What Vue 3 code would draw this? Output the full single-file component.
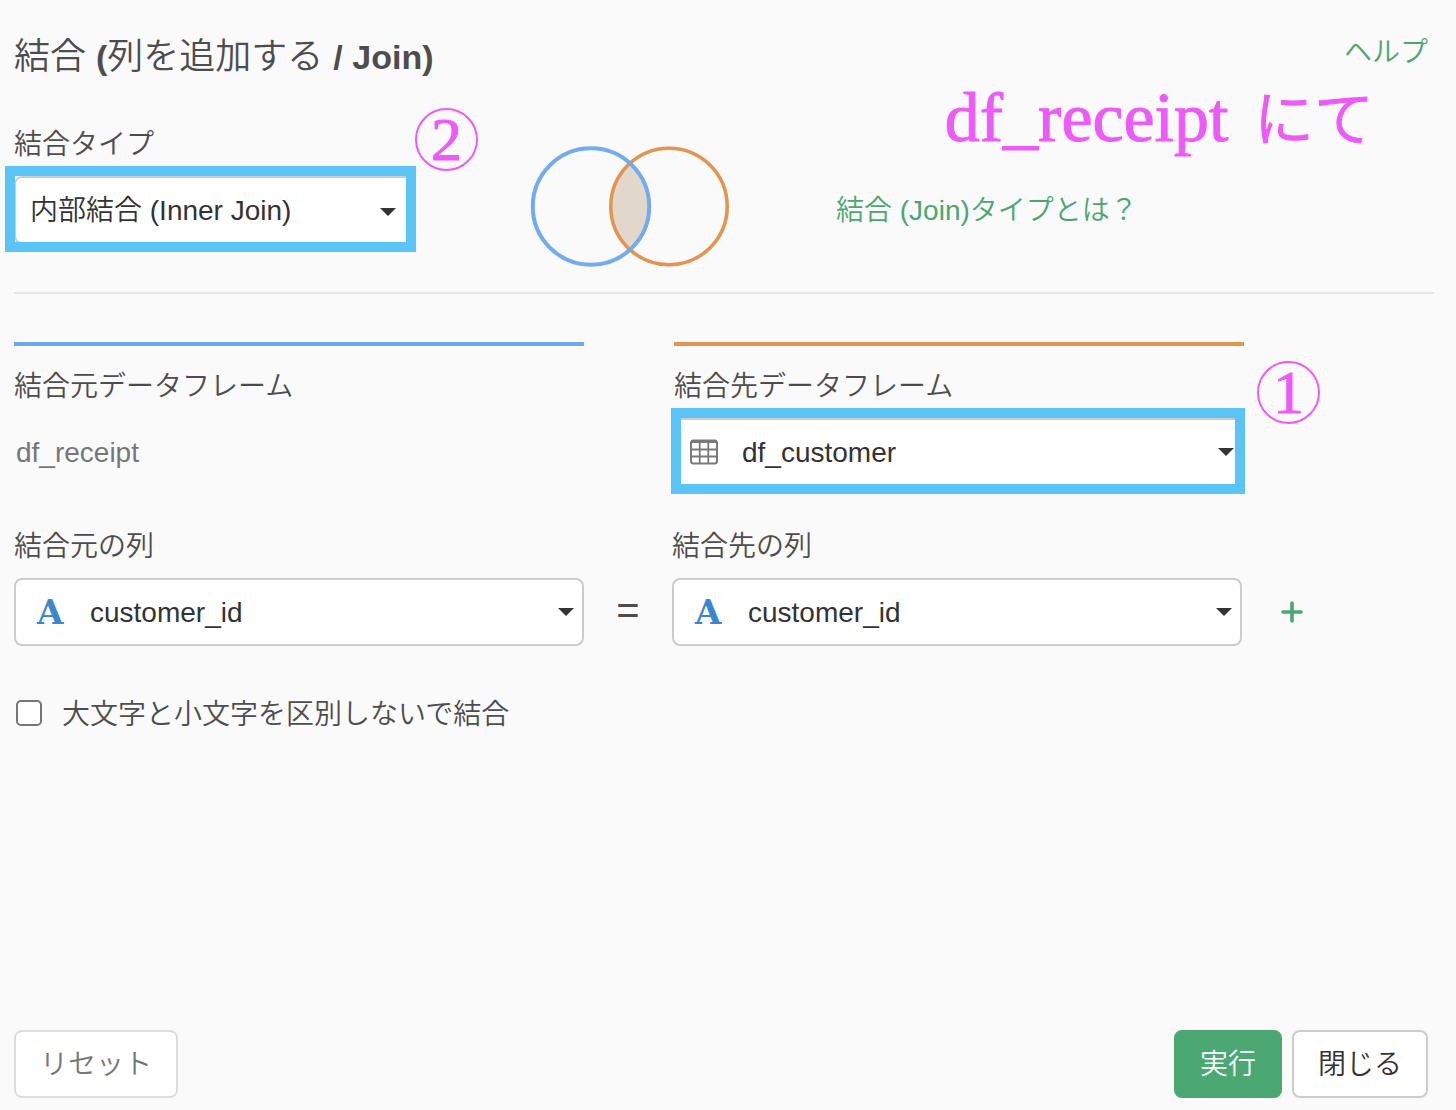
<script setup>
import { ref } from 'vue'

const joinTypes = [
  { value: 'inner', label: '内部結合 (Inner Join)' },
  { value: 'left', label: '左外部結合 (Left Join)' },
  { value: 'right', label: '右外部結合 (Right Join)' },
  { value: 'full', label: '完全外部結合 (Full Join)' }
]
const dataFrames = ['df_customer', 'df_product', 'df_store']
const columns = ['customer_id', 'store_cd', 'product_cd']

const joinType = ref('inner')
const targetFrame = ref('df_customer')
const sourceColumn = ref('customer_id')
const targetColumn = ref('customer_id')
const ignoreCase = ref(false)

const reset = () => {
  joinType.value = 'inner'
  targetFrame.value = 'df_customer'
  sourceColumn.value = 'customer_id'
  targetColumn.value = 'customer_id'
  ignoreCase.value = false
}
</script>

<template>
  <main class="dialog">
    <header class="dialog-header">
      <h1>結合 <b>(</b>列を追加する <b>/ Join)</b></h1>
      <a href="#help" class="link help">ヘルプ</a>
    </header>
    <p class="note">df_receipt <span class="note-ja">にて</span></p>

    <section class="join-type">
      <div class="field join-type-field">
        <label for="join-type">結合タイプ</label>
        <div class="select-box">
          <select id="join-type" v-model="joinType">
            <option v-for="type in joinTypes" :key="type.value" :value="type.value">{{ type.label }}</option>
          </select>
          <span class="caret"></span>
          <span class="frame"></span>
        </div>
        <span class="step">2</span>
      </div>
      <svg class="venn" width="200" height="122" viewBox="0 0 200 122" fill="none">
        <path d="M100 17.4A58.5 58.5 0 0 1 100 104.6A58.5 58.5 0 0 1 100 17.4Z" fill="#e1d8cb" />
        <circle cx="139" cy="60.5" r="58.2" stroke="#e3954f" stroke-width="3.6" />
        <circle cx="61" cy="60.5" r="58.2" stroke="#72abee" stroke-width="4" />
      </svg>
      <a href="#join-types" class="link">結合 (Join)タイプとは？</a>
    </section>

    <section class="frames">
      <div class="field source">
        <span class="label">結合元データフレーム</span>
        <div class="frame-name">df_receipt</div>
      </div>
      <div class="field target">
        <label for="target-frame">結合先データフレーム</label>
        <div class="select-box with-table">
          <select id="target-frame" v-model="targetFrame">
            <option v-for="name in dataFrames" :key="name">{{ name }}</option>
          </select>
          <svg class="table-icon" width="28" height="26" viewBox="0 0 28 26" fill="none" stroke="#7a7a7a">
            <rect x="1" y="1.5" width="26" height="23" rx="2.5" stroke-width="2" />
            <path d="M1.5 2.5H26.5" stroke-width="3" />
            <path d="M1 10.5H27M1 17.5H27M9.7 3V24M18.3 3V24" stroke-width="1.8" />
          </svg>
          <span class="caret"></span>
          <span class="frame"></span>
        </div>
        <span class="step">1</span>
      </div>
    </section>

    <section class="columns">
      <div class="field">
        <label for="source-column">結合元の列</label>
        <div class="select-box with-type">
          <select id="source-column" v-model="sourceColumn">
            <option v-for="name in columns" :key="name">{{ name }}</option>
          </select>
          <span class="type-icon">A</span>
          <span class="caret"></span>
        </div>
      </div>
      <span class="equals">=</span>
      <div class="field">
        <label for="target-column">結合先の列</label>
        <div class="select-box with-type">
          <select id="target-column" v-model="targetColumn">
            <option v-for="name in columns" :key="name">{{ name }}</option>
          </select>
          <span class="type-icon">A</span>
          <span class="caret"></span>
        </div>
      </div>
      <button class="add" type="button" aria-label="列を追加">
        <svg width="22" height="22" viewBox="0 0 22 22" stroke="#4aa772" stroke-width="3.6" stroke-linecap="round">
          <path d="M11 2V20M2 11H20" />
        </svg>
      </button>
    </section>

    <label class="ignore-case">
      <input v-model="ignoreCase" type="checkbox">
      大文字と小文字を区別しないで結合
    </label>

    <footer class="dialog-footer">
      <button class="btn btn-reset" type="button" @click="reset">リセット</button>
      <div class="actions">
        <button class="btn btn-run" type="button">実行</button>
        <button class="btn" type="button">閉じる</button>
      </div>
    </footer>
  </main>
</template>

<style>
body {
  background: #fafafa;
}
</style>

<style scoped>
.dialog,
.dialog * {
  box-sizing: border-box;
}

.dialog {
  position: relative;
  display: flex;
  flex-direction: column;
  min-height: 100vh;
  padding: 33px 22px 12px 14px;
  background: #fafafa;
  color: #4d4d4d;
  font-family: "Liberation Sans", "Noto Sans CJK JP", sans-serif;
  font-size: 28px;
  font-weight: 350;
  line-height: 48px;
}

.dialog-header {
  display: flex;
  justify-content: space-between;
  margin: 0 6px 40px 0;
}

h1 {
  margin: 0;
  font-size: 36px;
  font-weight: 350;
}

h1 b {
  font-size: 34px;
  font-weight: 700;
}

.link {
  color: #4aa772;
  text-decoration: none;
}

.help {
  margin-top: -4px;
}

.note {
  position: absolute;
  top: 78px;
  right: 82px;
  margin: 0;
  color: #ee5af8;
  font-family: "Liberation Serif", "Noto Sans CJK JP", serif;
  font-size: 70px;
  line-height: 80px;
  white-space: nowrap;
  -webkit-text-stroke: 1px #ee5af8;
}

.note-ja {
  margin-left: 8px;
  font-size: 60px;
}

.field {
  position: relative;
  display: flex;
  flex-direction: column;
  gap: 7px;
}

.join-type {
  display: flex;
  align-items: flex-start;
  padding-bottom: 24px;
  border-bottom: 2px solid #e6e6e6;
}

.join-type-field {
  width: 400px;
}

.venn {
  margin: 25px 106px 0 116px;
}

.join-type .link {
  margin-top: 66px;
}

.select-box {
  position: relative;
}

select {
  display: block;
  width: 100%;
  height: 68px;
  padding: 2px 40px 0 14px;
  border: 2px solid #ccc;
  border-radius: 8px;
  background: #fff;
  color: #333;
  font: inherit;
  appearance: none;
}

.with-table select {
  padding-left: 66px;
}

.with-type select {
  padding-left: 74px;
}

.caret {
  position: absolute;
  top: 30px;
  right: 10px;
  border-top: 8px solid #333;
  border-right: 8px solid transparent;
  border-left: 8px solid transparent;
  pointer-events: none;
}

.join-type .caret {
  top: 32px;
  right: 18px;
}

.frame {
  position: absolute;
  inset: -10px -1px -8px -3px;
  border: 10px solid #5ac4f6;
  pointer-events: none;
}

.join-type .frame {
  right: -2px;
  left: -9px;
}

.table-icon {
  position: absolute;
  top: 21px;
  left: 16px;
  pointer-events: none;
}

.type-icon {
  position: absolute;
  top: 10px;
  left: 23px;
  color: #3a87cf;
  font-family: "DejaVu Serif", serif;
  font-size: 34px;
  font-weight: 700;
  pointer-events: none;
}

.step {
  position: absolute;
  top: -13px;
  left: calc(100% + 1px);
  width: 63px;
  height: 63px;
  border: 2px solid #ee5af8;
  border-radius: 50%;
  color: #ee5af8;
  font-family: "Liberation Serif", serif;
  font-size: 62px;
  line-height: 58px;
  text-align: center;
  -webkit-text-stroke: 1px #ee5af8;
}

.target .step {
  top: 15px;
  left: calc(100% + 13px);
}

.frames {
  display: grid;
  grid-template-columns: 3fr 90px 3fr 1fr;
  margin-top: 48px;
}

.source,
.target {
  padding-top: 17px;
  border-top: 4px solid #6ea8ee;
}

.target {
  grid-column: 3;
  border-color: #e3954f;
}

.frame-name {
  padding: 2px 0 0 2px;
  color: #777;
  line-height: 66px;
}

.columns {
  display: grid;
  grid-template-columns: 1fr 88px 1fr 192px;
  align-items: end;
  margin-top: 37px;
}

.equals {
  font-size: 40px;
  line-height: 72px;
  text-align: center;
}

.add {
  display: flex;
  align-items: center;
  justify-self: start;
  height: 68px;
  margin-left: 29px;
  padding: 0 10px;
  border: none;
  background: none;
  cursor: pointer;
}

.ignore-case {
  display: flex;
  align-items: flex-start;
  align-self: flex-start;
  gap: 20px;
  margin-top: 45px;
}

.ignore-case input {
  width: 26px;
  height: 26px;
  margin: 9px 0 0 2px;
  border: 2px solid #767676;
  border-radius: 5px;
  background: #fff;
  appearance: none;
}

.ignore-case input:checked {
  background: #4aa772;
}

.dialog-footer {
  display: flex;
  justify-content: space-between;
  margin: auto 6px 0 0;
}

.actions {
  display: flex;
  gap: 10px;
}

.btn {
  height: 68px;
  padding: 2px 24px 0;
  border: 2px solid #ccc;
  border-radius: 8px;
  background: #fff;
  color: #333;
  font: inherit;
  cursor: pointer;
}

.btn-reset {
  border-color: #ddd;
  color: #777;
}

.btn-run {
  border-color: #4ca873;
  background: #4ca873;
  color: #fff;
}
</style>
